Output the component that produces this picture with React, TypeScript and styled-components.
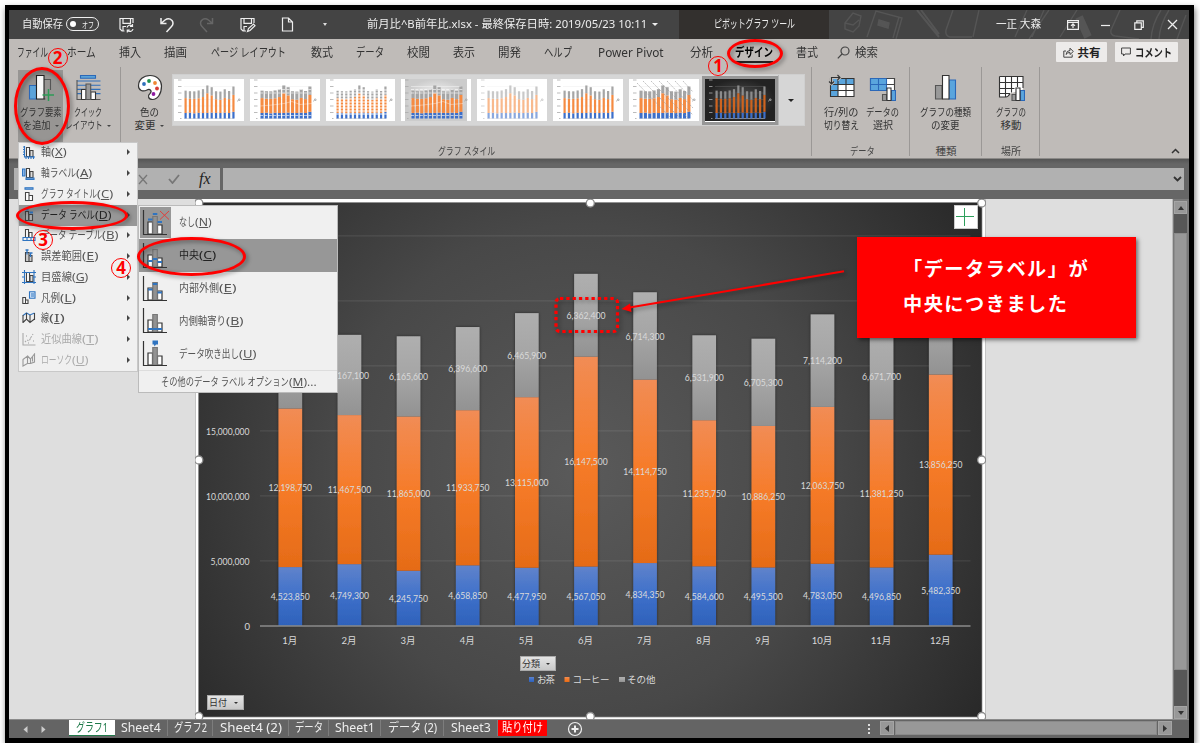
import { useLayoutEffect, useRef, useState } from 'react';
import type { ReactNode } from 'react';
import styled, { createGlobalStyle, css } from 'styled-components';

const GlobalStyle = createGlobalStyle`
  * { box-sizing: border-box; }
  body {
    margin: 0;
    background: #fff;
    overflow: hidden;
    font-family: 'Noto Sans', 'Noto Sans CJK JP', sans-serif;
    font-size: 12px;
    color: #333;
  }
  svg { display: block; flex: none; }
`;

// Condenses a label to the width its slot has, like the narrow kana of the UI font.
function Fit({ w, children }: { w: number; children: ReactNode }) {
  const ref = useRef<HTMLSpanElement>(null);
  const [scale, setScale] = useState(1);

  useLayoutEffect(() => {
    if (ref.current) setScale(w / ref.current.offsetWidth);
  }, [w]);

  return (
    <FitBox $w={w}>
      <FitInner ref={ref} style={{ transform: `scaleX(${scale})` }}>
        {children}
      </FitInner>
    </FitBox>
  );
}

const MONTHS = [
  [4523850, 12198750, 6120000],
  [4749300, 11467500, 6167100],
  [4245750, 11865000, 6165600],
  [4658850, 11933750, 6396600],
  [4477950, 13115000, 6465900],
  [4567050, 16147500, 6362400],
  [4834350, 14114750, 6714300],
  [4584600, 11235750, 6531900],
  [4495500, 10886250, 6705300],
  [4783050, 12063750, 7114200],
  [4496850, 11381250, 6671700],
  [5482350, 13856250, 6890000],
];
const SERIES = ['tea', 'coffee', 'other'];
const BASE_Y = 625.9;
const PX_PER_UNIT = 13 / 1000000;

const TABS = [
  { label: 'ファイル', w: 31, ml: 8 },
  { label: 'ホーム', w: 29, ml: 19 },
  { label: '挿入', w: 22, ml: 23 },
  { label: '描画', w: 23, ml: 23 },
  { label: 'ページ レイアウト', w: 75, ml: 24 },
  { label: '数式', w: 22, ml: 25 },
  { label: 'データ', w: 28, ml: 23 },
  { label: '校閲', w: 23, ml: 23 },
  { label: '表示', w: 22, ml: 23 },
  { label: '開発', w: 23, ml: 23 },
  { label: 'ヘルプ', w: 28, ml: 23 },
  { label: 'Power Pivot', w: 66, ml: 26 },
  { label: '分析', w: 23, ml: 26 },
  { label: 'デザイン', w: 38, ml: 22, active: true },
  { label: '書式', w: 22, ml: 23 },
];

const MENU = [
  { text: '軸', k: 'X', w: 26, icon: 'axis' },
  { text: '軸ラベル', k: 'A', w: 51, icon: 'axisTitle' },
  { text: 'グラフ タイトル', k: 'C', w: 72, icon: 'title' },
  { text: 'データ ラベル', k: 'D', w: 70, icon: 'label', active: true },
  { text: 'データ テーブル', k: 'B', w: 77, icon: 'table' },
  { text: '誤差範囲', k: 'E', w: 57, icon: 'error' },
  { text: '目盛線', k: 'G', w: 47, icon: 'grid' },
  { text: '凡例', k: 'L', w: 35, icon: 'legend' },
  { text: '線', k: 'I', w: 24, icon: 'line' },
  { text: '近似曲線', k: 'T', w: 57, icon: 'trend', off: true },
  { text: 'ローソク', k: 'U', w: 47, icon: 'candle', off: true },
];

const SUBMENU = [
  { text: 'なし', k: 'N', w: 33, kind: 'none' },
  { text: '中央', k: 'C', w: 37, kind: 'center', active: true },
  { text: '内部外側', k: 'E', w: 57, kind: 'insideEnd' },
  { text: '内側軸寄り', k: 'B', w: 64, kind: 'insideBase' },
  { text: 'データ吹き出し', k: 'U', w: 77, kind: 'callout' },
];

const SHEETS = [
  { label: 'Sheet4', w: 40, cell: 53 },
  { label: 'グラフ2', w: 33, cell: 45 },
  { label: 'Sheet4 (2)', w: 62, cell: 76 },
  { label: 'データ', w: 28, cell: 40 },
  { label: 'Sheet1', w: 40, cell: 52 },
  { label: 'データ (2)', w: 49, cell: 63 },
  { label: 'Sheet3', w: 40, cell: 54 },
];

function MenuIcon({ kind }: { kind: string }) {
  const d = '#444';
  const b = '#2f74c0';
  const bars = (
    <g fill="#fff" stroke={d}>
      <path d="M4.5 2.5h3v9h-3z" />
      <path d="M8 5.500h3v6H8z" fill="#ddd" />
    </g>
  );
  return (
    <svg width="14" height="14" viewBox="0 0 14 14" fill="none" strokeWidth="1.1">
      {kind === 'axis' && (<>{bars}<path d="M2.500 1v11H13" stroke={b} /><path d="M1 2h2M1 4.500h2M1 7h2M1 9.500h2M4 11v3M6.500 11v3M9 11v3M11.500 11v3" stroke={b} /></>)}
      {kind === 'axisTitle' && (<>{bars}<path d="M.5 3h2.500v7H.5zM4 12h8v1.500H4z" stroke={b} fill="#8db8e8" /></>)}
      {kind === 'title' && (<><path d="M3 .7h8v1.500H3z" stroke={b} fill="#8db8e8" /><path d="M3.500 5.500h3.500v8H3.500zM7 8.500h3.500v5H7z" stroke={d} fill="#fff" /></>)}
      {kind === 'label' && (<><path d="M3.500 3.500h3v9h-3zM7 6.500h3.500v6H7z" stroke={d} fill="#aaa" /><path d="M3.500 1.500h3M7.500 4.500h3.500" stroke={b} strokeWidth="1.800" /></>)}
      {kind === 'table' && (<><path d="M3.500 1.500h3v8h-3zM7 4.500h3v5H7z" stroke={d} fill="#fff" /><path d="M1 9.500h12v3H1zM5 9.500v3M9 9.500v3" stroke={b} /></>)}
      {kind === 'error' && (<><path d="M3.500 3.500h3.500v9H3.500zM7 6.500h3v6H7z" stroke={d} fill="#ccc" /><path d="M5 .500v5M3.500 1h3M8.500 4v4M7.500 4h3" stroke={b} strokeWidth="1.300" /></>)}
      {kind === 'grid' && (<>{bars}<path d="M0 2.500h14M0 7h3M11 7h3M0 12.500h14M2.500 0v14M12 0v14" stroke={b} /></>)}
      {kind === 'legend' && (<><path d="M.8 6.500h2.700v6H.8zM3.500 9h2.500v3.500H3.500z" stroke={d} fill="#fff" /><path d="M7.500.8H13v6.400H7.500z" stroke={b} fill="#cfe2f7" /><path d="M9 3h3M9 5h3" stroke={b} /></>)}
      {kind === 'line' && (<><path d="M1 4.500 4.500 2 8 4l4.500-2" stroke={b} /><path d="M1 11.500 4.500 8 8 11.500 12.500 8M1 4v8M4.500 2v7M8 4v8M12.500 2v7" stroke={d} /></>)}
      {kind === 'trend' && (<><path d="M1 1v12h12.500" stroke="#aaa" /><path d="m3 10 2-2 2 1 4-7" stroke="#aaa" strokeDasharray="1.500 1.500" /><path d="M4 4h1M8 6h1M11 9h1M6 11h1" stroke="#999" /></>)}
      {kind === 'candle' && (<path d="M1 6.500 5.500 3v7.500L1 13zM5.500 3 8.500 6v4.500l-3 0M8.500 6l4-5v8l-4 1.500M10.500 3.500v5" stroke="#999" />)}
    </svg>
  );
}

function LabelIcon({ kind }: { kind: string }) {
  const y = { none: [11.5, 6, 14], center: [20, 18, 21], insideEnd: [15.5, 10, 18.5], insideBase: [23, 23, 23] }[kind];
  return (
    <svg width="28" height="29" viewBox="0 0 28 29" fill="none" strokeWidth="1.200" stroke="#333">
      <path d="M6 14h4.500v12H6z" fill="#fff" />
      <path d="M15.500 17H20v9h-4.500z" fill="#fff" />
      <path d="M10.800 8.500h4.500V26h-4.500z" fill="#929292" stroke="#777" />
      <path d="M1.500 2v24.500H25" />
      {kind === 'callout' && <path d="M10.500 1.500H16v4h-2l-1.500 2-.5-2h-1.500z" fill="#2f74c0" stroke="none" />}
      {y && <path d={`M6 ${y[0]}h4.500M10.800 ${y[1]}h4.500M15.500 ${y[2]}h4.500`} stroke="#2f74c0" strokeWidth="1.800" />}
      {kind === 'none' && <path d="m18 3 9 8.500M27 3l-9 8.500" stroke="#e0403c" strokeWidth="1" />}
    </svg>
  );
}

function StyleThumb({ variant }: { variant: number }) {
  const dark = variant === 7;
  const heights = MONTHS.map((m) => m.map((v) => v * 0.00000122));
  const wide = variant === 1 || variant === 3 || variant === 6;
  return (
    <svg width="70" height="42" viewBox="0 0 70 42" opacity={variant === 4 ? 0.6 : 1}>
      <defs>
        <radialGradient id="thumbDark"><stop offset="0" stopColor="#555" /><stop offset="1" stopColor="#222" /></radialGradient>
        <radialGradient id="thumbSoft"><stop offset="0" stopColor="#fff" /><stop offset="1" stopColor="#ccc" /></radialGradient>
      </defs>
      <rect width="70" height="42" fill={dark ? 'url(#thumbDark)' : '#fff'} />
      {variant === 3 && <rect x="4" width="62" height="42" fill="url(#thumbSoft)" />}
      <path d="M4 1h3.500M4 7.500h3.500M4 14h3.500M4 20.500h3.500M4 27h3.500M4 33.500h3.500M6 39.500h1.500" stroke="#aaa" strokeWidth=".8" />
      <path d="M10 39.500h50" stroke="#ccc" strokeWidth=".6" />
      {variant !== 2 && <path d="M10 7.500h50M10 14h50M10 20.500h50M10 27h50M10 33.500h50" stroke={dark ? '#555' : '#f0f0f0'} strokeWidth=".6" />}
      {heights.map(([a, b, c], i) => {
        const w = wide ? 3.1 : 2.200;
        const x = 10.5 + i * 4.35;
        return (
          <g key={i}>
            <rect x={x} y={39.5 - a} width={w} height={a} fill="#3d6fc9" />
            <rect x={x} y={39.5 - a - b} width={w} height={b} fill={dark ? '#cf641f' : '#f58b42'} />
            <rect x={x} y={39.5 - a - b - c} width={w} height={c} fill={dark ? '#8c8c8c' : '#a5a5a5'} />
          </g>
        );
      })}
      {(variant === 1 || variant === 3) && (
        <>
          <path d="M10 36.500h52M10 10.500h52M10 14h52" stroke="#fff" strokeWidth=".6" strokeDasharray="3 1.400" />
          <path d="M10 27l12-1 12-1.500 8-2 8 3 12-1" stroke="#fff" strokeOpacity=".5" strokeWidth=".7" fill="none" />
        </>
      )}
      {variant === 2 && <path d="M10 11h52M10 14h52M10 17h52M10 20h52M10 23h52M10 26h52M10 29h52M10 32h52M10 35h52" stroke="#fff" strokeWidth=".9" />}
      {variant === 6 && (
        <path
          d="M8 4l34 35M14 2l38 38M22 2l38 38M30 2l34 34M38 2l26 27M46 2l18 19M54 2l10 11"
          stroke="#999"
          strokeWidth=".6"
          strokeDasharray="2 1"
        />
      )}
      <path d="M64.500 20h1.500v1.500h-1.500zM63 22h1" stroke="#aaa" strokeWidth=".8" fill="none" />
    </svg>
  );
}

function PivotChart() {
  const grid = [5, 10, 15, 20, 25, 30];
  return (
    <svg width="791" height="520" viewBox="195 199 791 520">
      <defs>
        <radialGradient id="bg" gradientUnits="userSpaceOnUse" cx="580" cy="470" r="490">
          <stop offset="0" stopColor="#5a5a5a" />
          <stop offset=".5" stopColor="#484848" />
          <stop offset="1" stopColor="#262626" />
        </radialGradient>
        <linearGradient id="tea" x2="0" y2="1">
          <stop offset="0" stopColor="#6083cb" />
          <stop offset=".5" stopColor="#3e70ca" />
          <stop offset="1" stopColor="#2e61ba" />
        </linearGradient>
        <linearGradient id="coffee" x2="0" y2="1">
          <stop offset="0" stopColor="#f18c55" />
          <stop offset=".5" stopColor="#f67b28" />
          <stop offset="1" stopColor="#e56b17" />
        </linearGradient>
        <linearGradient id="other" x2="0" y2="1">
          <stop offset="0" stopColor="#afafaf" />
          <stop offset=".5" stopColor="#a5a5a5" />
          <stop offset="1" stopColor="#929292" />
        </linearGradient>
        <filter id="barShadow" x="-50%" y="-5%" width="200%" height="110%">
          <feDropShadow dx="0" dy="0" stdDeviation="1.5" floodColor="#000" floodOpacity=".5" />
        </filter>
      </defs>
      <rect x="195" y="199" width="791" height="520" fill="#fff" />
      <path d="M195.500 199v520M985.500 199v520" stroke="#c4c4c4" />
      <rect x="198.500" y="202.500" width="783.500" height="514.500" fill="url(#bg)" stroke="#8a8a8a" strokeWidth=".7" />
      {grid.map((g) => (
        <path key={g} d={`M260 ${BASE_Y - g * 13}H970.500`} stroke="#fff" strokeOpacity=".11" />
      ))}
      {MONTHS.map((values, i) => {
        const cx = 290.3 + i * 59.13;
        let top = BASE_Y;
        return (
          <g key={i}>
            <g filter="url(#barShadow)">
              {values.map((v, s) => {
                const h = v * PX_PER_UNIT;
                top -= h;
                return <rect key={s} x={cx - 11.8} y={top} width="23.6" height={h} fill={`url(#${SERIES[s]})`} />;
              })}
            </g>
            <ChartText x={cx - 0.5} y="643.500" textAnchor="middle">{i + 1}月</ChartText>
          </g>
        );
      })}
      <path d="M260 626H970.500" stroke="#8b8b8b" strokeWidth="1.300" />
      {MONTHS.map((values, i) => {
        const cx = 290.3 + i * 59.13;
        let sum = 0;
        return values.map((v, s) => {
          const y = BASE_Y - (sum + v / 2) * PX_PER_UNIT;
          sum += v;
          if (s === 2 && (i === 0 || i === 11)) return null;
          const len = v >= 10000000 ? 43.5 : 39;
          return (
            <ChartText key={`${i}-${s}`} x={cx - len / 2} y={y + 3.7} textLength={len} lengthAdjust="spacingAndGlyphs">
              {v.toLocaleString('en-US')}
            </ChartText>
          );
        });
      })}
      <ChartText x="206" y="434.500" textLength="43.5" lengthAdjust="spacingAndGlyphs">15,000,000</ChartText>
      <ChartText x="206" y="499.500" textLength="43.5" lengthAdjust="spacingAndGlyphs">10,000,000</ChartText>
      <ChartText x="210.500" y="564.500" textLength="39" lengthAdjust="spacingAndGlyphs">5,000,000</ChartText>
      <ChartText x="244.500" y="629.500">0</ChartText>
      <rect x="529" y="677" width="5" height="5" fill="url(#tea)" />
      <ChartText x="537" y="682.500" textLength="18">お茶</ChartText>
      <rect x="564.500" y="677" width="5" height="5" fill="url(#coffee)" />
      <ChartText x="572.500" y="682.500" textLength="37">コーヒー</ChartText>
      <rect x="619" y="677" width="6" height="5" fill="url(#other)" />
      <ChartText x="627" y="682.500" textLength="28.5">その他</ChartText>
      {[203, 460, 716.5].map((y) =>
        [198.8, 590.3, 981.7]
          .filter((x) => !(y === 460 && x === 590.3))
          .map((x) => <circle key={`${x}-${y}`} cx={x} cy={y} r="4" fill="#fff" stroke="#8c8c8c" strokeWidth="1.3" />)
      )}
    </svg>
  );
}

function TitleSketches() {
  return (
    <svg width="350" height="29" viewBox="0 0 350 29" fill="none" stroke="#555" strokeWidth="1.4">
      <path d="m8 13 8-10 8 3-2 10-6 6-8-3zM8 13l8 2 6-5" />
      <path d="m30 27 9-26 26 7-6 21M62 7l-6 21" />
      <path d="m42 10 10 3-1 5-10-3z" fill="#555" />
      <path d="m80 0 22 27M84 0l18 24" strokeWidth="2" />
      <path d="m116 0-7 20q-1 6 4 7h22M142 0l-6 27" />
      <path d="m178 27 12-27M207 0l-12 27M212 0l-20 29M240 0l-17 27" />
      <path d="m242 7 9 20" strokeWidth="8" />
      <path d="M283 0l-9 20q-1 5 4 6l24 3M324 0q-9 14-10 29M332 0q-9 14-10 29M349 5l-9 24" />
    </svg>
  );
}

export default function App() {
  return (
    <>
      <GlobalStyle />
      <Window>
        <TitleBar>
          <TitleSlot $x={13} $text><Fit w={41}>自動保存</Fit></TitleSlot>
          <Toggle><ToggleDot /><Fit w={12}>オフ</Fit></Toggle>
          <TitleSlot $x={20}>
            <svg width="16" height="16" viewBox="0 0 16 16" fill="none" stroke="#eee" strokeWidth="1.2">
              <path d="M5.500 14H3L1 12V1.500h13V6M4 1.500v4.800h7.500V1.500M4 14V9.500h3" />
              <path d="M8 10.500a3 3 0 0 1 5-1.500M13.500 7v2.500H11M14 12a3 3 0 0 1-5.300 1.300M8.300 15.500V13h2.500" />
            </svg>
          </TitleSlot>
          <TitleSlot $x={24}>
            <svg width="16" height="16" viewBox="0 0 16 16" fill="none" stroke="#eee" strokeWidth="1.5">
              <path d="M2 1v5.500h5.500M2 6.500 6 3q4-2.700 7 .5 2.200 3-.5 6L7.500 15" />
            </svg>
          </TitleSlot>
          <TitleSlot $x={24}>
            <svg width="16" height="16" viewBox="0 0 16 16" fill="none" stroke="#666" strokeWidth="1.5">
              <path d="M13.500 1v5.500H8M13.500 6.500 9.500 3q-4-2.700-7 .5-2.200 3 .5 6L8 15" />
            </svg>
          </TitleSlot>
          <TitleSlot $x={25}>
            <svg width="16" height="16" viewBox="0 0 16 16" fill="none" stroke="#eee" strokeWidth="1.2">
              <path d="M6 14H3L1 12V1.500h13V6M4 1.500v4.800h7.500V1.500M4 14V9.500h3M7.500 14.500l1-3 5-4.500 1.500 1.700-5 4.800z" />
            </svg>
          </TitleSlot>
          <TitleSlot $x={25}>
            <svg width="13" height="15" viewBox="0 0 13 15" fill="none" stroke="#eee" strokeWidth="1.2">
              <path d="M1.500 1h6l4 4v9h-10zM7.500 1v4h4" />
            </svg>
          </TitleSlot>
          <TitleSlot $x={29}><Caret $c="#ddd" $s={2.5} /></TitleSlot>
          <TitleSlot $x={40} $text><Fit w={280}>前月比^B前年比.xlsx - 最終保存日時: 2019/05/23 10:11</Fit></TitleSlot>
          <TitleSlot $x={5}><Caret $c="#eee" $s={3} /></TitleSlot>
          <ContextTitle><Fit w={81}>ピボットグラフ ツール</Fit></ContextTitle>
          <TitleRight>
            <Sketches><TitleSketches /></Sketches>
            <TitleSlot $x={167} $text><Fit w={45}>一正 大森</Fit></TitleSlot>
            <TitleSlot $x={26}>
              <svg width="12" height="10" viewBox="0 0 12 10" fill="none" stroke="#eee" strokeWidth="1.2">
                <path d="M.6.6h10.800v8.800H.6zM.6 2.500h10.800M6 8V4M4 5.800l2-2 2 2" />
              </svg>
            </TitleSlot>
            <TitleSlot $x={22}><svg width="9" height="10"><path d="M0 5.500h9" stroke="#eee" strokeWidth="1.2" /></svg></TitleSlot>
            <TitleSlot $x={24}>
              <svg width="10" height="10" viewBox="0 0 10 10" fill="none" stroke="#eee" strokeWidth="1.2">
                <path d="M.8 2.800h6.500v6.500H.8zM2.800 2.500V.8h6.500v6.500H7.500" />
              </svg>
            </TitleSlot>
            <TitleSlot $x={23}><svg width="11" height="11"><path d="m1 1 9 9M10 1l-9 9" stroke="#eee" strokeWidth="1.3" /></svg></TitleSlot>
          </TitleRight>
        </TitleBar>

        <TabRow>
          {TABS.map((t) => (
            <Tab key={t.label} $ml={t.ml} $active={t.active}><Fit w={t.w}>{t.label}</Fit></Tab>
          ))}
          <Tab $ml={19}>
            <svg width="13" height="13" viewBox="0 0 13 13" fill="none" stroke="#444" strokeWidth="1.2">
              <circle cx="8" cy="5" r="4" /><path d="M5 8 .800 12.400" />
            </svg>
          </Tab>
          <Tab $ml={5}><Fit w={23}>検索</Fit></Tab>
          <TabActions>
            <ActionButton $w={51}>
              <svg width="11" height="11" viewBox="0 0 11 11" fill="none" stroke="#444">
                <path d="M3 4H.8v6.200h8.400V7.500M3 7.500q.500-4 4-4V1.200L10.300 4.500 7 7.500V5.500Q4.500 5.300 3 7.500z" />
              </svg>
              <Fit w={23}>共有</Fit>
            </ActionButton>
            <ActionButton $w={63}>
              <svg width="10" height="10" viewBox="0 0 10 10" fill="none" stroke="#444"><path d="M.6 1h8.800v6H4L2.500 9V7H.6z" /></svg>
              <Fit w={37}>コメント</Fit>
            </ActionButton>
          </TabActions>
        </TabRow>

        <Ribbon>
          <Group $w={112} $pad={9}>
            <BigButton $w={45} $pressed>
              <svg width="27" height="27" viewBox="0 0 27 27" fill="none" strokeWidth="1.1">
                <path d="M2.500 11.500h7V25h-7z" fill="#5ba3d9" stroke="#2b68b8" />
                <path d="M17 5.500h6.500V16M17 25h1.500" stroke="#555" />
                <path d="M9.500 1.500H17V25H9.500z" fill="#f8f8f8" stroke="#222" />
                <path d="M21.500 15v12M15.500 21h12" stroke="#2e9b57" strokeWidth="1.5" />
              </svg>
              <BtnText><Fit w={42}>グラフ要素</Fit></BtnText>
              <BtnText><Fit w={28}>を追加</Fit><Caret $c="#444" $s={2} /></BtnText>
            </BigButton>
            <BigButton $w={50}>
              <svg width="27" height="27" viewBox="0 0 27 27" fill="none" strokeWidth="1.1">
                <path d="M5.500 1.500h15v2.700h-15z" fill="#5ba3d9" stroke="#2b68b8" />
                <path d="M2 7h23.500M2 11.200h23.500M2 15.400h23.500M2 19.600h23.500" stroke="#2f6fba" />
                <path d="M2 6v19.500h23.500" stroke="#555" />
                <path d="M6.500 15.500H11v10H6.500zM15.800 18h4.700v7.500h-4.700z" fill="#fff" stroke="#333" />
                <path d="M11 10h4.700v15.500H11z" fill="#999" stroke="#555" />
              </svg>
              <BtnText><Fit w={28}>クイック</Fit></BtnText>
              <BtnText><Fit w={38}>レイアウト</Fit><Caret $c="#444" $s={2} /></BtnText>
            </BigButton>
          </Group>
          <Group $w={691} $pad={5}>
            <GroupBody>
              <BigButton $w={46}>
                <svg width="27" height="27" viewBox="0 0 27 27">
                  <path d="M14 1.500c7 0 11.500 4.800 11.500 10.500 0 8-4 13.500-9 13.500-4.500 0-5-4-2.500-6 2.500-2.500 0-5-3-3.500-4 2-8.500.5-8.500-4C2.500 5.500 7.500 1.500 14 1.500z" fill="#fff" stroke="#333" strokeWidth="1.2" />
                  <circle cx="8" cy="10" r="1.900" fill="#2f6fba" />
                  <circle cx="13" cy="7" r="1.900" fill="#1f9150" />
                  <circle cx="19" cy="9" r="1.900" fill="#ee8632" />
                  <circle cx="21" cy="14.500" r="1.900" fill="#d63a34" />
                  <circle cx="17.500" cy="20" r="1.900" fill="#8e1ba0" />
                </svg>
                <BtnText><Fit w={19}>色の</Fit></BtnText>
                <BtnText><Fit w={21}>変更</Fit><Caret $c="#444" $s={2} /></BtnText>
              </BigButton>
              <Gallery>
                {[0, 1, 2, 3, 4, 5, 6, 7].map((v) => (
                  <Thumb key={v} $selected={v === 7}><StyleThumb variant={v} /></Thumb>
                ))}
                <GalleryMore><Caret $c="#222" $s={3} /></GalleryMore>
              </Gallery>
            </GroupBody>
            <GroupLabel><Fit w={57}>グラフ スタイル</Fit></GroupLabel>
          </Group>
          <Group $w={98} $pad={8}>
            <GroupBody>
              <BigButton $w={42}>
                <svg width="27" height="27" viewBox="0 0 27 27" fill="none" strokeWidth="1.1">
                  <path d="M2.500 4.500h23.500v18H2.500z" fill="#fff" />
                  <path d="M2.500 4.500h23.500v6H2.500zM2.500 10.500h7.500v12H2.500z" fill="#5aa5dd" />
                  <path d="M2.500 10.500h23.500M2.500 16.500h23.500M10 4.500v18M18 4.500v18M2.500 4.500h23.500v18H2.500z" stroke="#333" />
                  <path d="M3.500 10V3.500H12M9.500 1 12 3.500 9.500 6M1 7.500 3.500 10 6 7.500" stroke="#bfbbb8" strokeWidth="3" />
                  <path d="M3.500 10V3.500H12M9.500 1 12 3.500 9.500 6M1 7.500 3.500 10 6 7.500" stroke="#333" />
                </svg>
                <BtnText><Fit w={34}>行/列の</Fit></BtnText>
                <BtnText><Fit w={35}>切り替え</Fit></BtnText>
              </BigButton>
              <BigButton $w={41}>
                <svg width="27" height="27" viewBox="0 0 27 27" fill="none" strokeWidth="1.1">
                  <path d="M1.500 4.500h24v12h-24z" fill="#fff" stroke="#444" />
                  <path d="M1.500 4.500h16v12h-16z" fill="#5aa5dd" />
                  <path d="M1.500 4.500h16v12h-16zM1.500 10.500h16M9.500 4.500v12" stroke="#2b68b8" />
                  <path d="M17.500 10.500h8M17.500 4.500h8v6" stroke="#444" />
                  <path d="M13.500 20.500h4v6h-4z" fill="#999" stroke="#555" />
                  <path d="M22.500 16.500h4v10h-4z" fill="#5aa5dd" stroke="#2b68b8" />
                  <path d="M18 14h4v12.500h-4z" fill="#fff" stroke="#333" />
                </svg>
                <BtnText><Fit w={33}>データの</Fit></BtnText>
                <BtnText><Fit w={20}>選択</Fit></BtnText>
              </BigButton>
            </GroupBody>
            <GroupLabel><Fit w={25}>データ</Fit></GroupLabel>
          </Group>
          <Group $w={72} $pad={5}>
            <GroupBody>
              <BigButton $w={61}>
                <svg width="27" height="27" viewBox="0 0 27 27" fill="none" strokeWidth="1.1">
                  <path d="M3.500 11.500h6.500V25H3.500z" fill="#999" stroke="#555" />
                  <path d="M17 6h6.500v19H17z" fill="#5aa5dd" stroke="#2b68b8" />
                  <path d="M10.500 1.500H17V25h-6.500z" fill="#fff" stroke="#333" />
                </svg>
                <BtnText><Fit w={51}>グラフの種類</Fit></BtnText>
                <BtnText><Fit w={29}>の変更</Fit></BtnText>
              </BigButton>
            </GroupBody>
            <GroupLabel><Fit w={21}>種類</Fit></GroupLabel>
          </Group>
          <Group $w={58} $pad={4}>
            <GroupBody>
              <BigButton $w={50}>
                <svg width="27" height="27" viewBox="0 0 27 27" fill="none" strokeWidth="1.1">
                  <path d="M1.500 2.500H25v13l-13 4q-2 3.500-4 3.500H1.500z" fill="#fff" />
                  <path d="M1.500 2.500H25V14M1.500 2.500v20.500H8q2 0 4-3.500M1.500 8.500H25M1.500 14.500h15M7.500 2.500v20M13.500 2.500v16M19.500 2.500V13M1.500 19.500H12" stroke="#333" />
                  <path d="M14 20.500h4v6h-4z" fill="#999" stroke="#555" />
                  <path d="M22.500 16.500h4v10h-4z" fill="#5aa5dd" stroke="#2b68b8" />
                  <path d="M18 14h4v12.500h-4z" fill="#fff" stroke="#333" />
                </svg>
                <BtnText><Fit w={30}>グラフの</Fit></BtnText>
                <BtnText><Fit w={21}>移動</Fit></BtnText>
              </BigButton>
            </GroupBody>
            <GroupLabel><Fit w={20}>場所</Fit></GroupLabel>
          </Group>
          <Collapse>
            <svg width="9" height="6"><path d="m1 5 3.500-3.500L8 5" fill="none" stroke="#333" strokeWidth="1.5" /></svg>
          </Collapse>
        </Ribbon>

        <FormulaRow>
          <FormulaTools>
            <svg width="11" height="11"><path d="m1 1 8 9M9 1 1 10" stroke="#777" strokeWidth="1.3" /></svg>
            <svg width="12" height="10"><path d="m1 5 3.500 4L11 1" fill="none" stroke="#777" strokeWidth="1.8" /></svg>
            <Fx>fx</Fx>
          </FormulaTools>
          <FormulaInput>
            <svg width="9" height="6"><path d="m1 1 3.500 3.500L8 1" fill="none" stroke="#333" strokeWidth="1.8" /></svg>
          </FormulaInput>
        </FormulaRow>

        <Workspace>
          <ChartFrame>
            <PivotChart />
            <PivotButton $x={325} $y={457} $w={36}><Fit w={18}>分類</Fit><Caret $c="#333" $s={2} /></PivotButton>
            <PivotButton $x={12} $y={496} $w={37}><Fit w={18}>日付</Fit><Caret $c="#333" $s={2} /></PivotButton>
            <PlusButton>
              <svg width="18" height="18"><path d="M8.500 0v18M0 8.500h18" stroke="#2ea05c" /></svg>
            </PlusButton>
          </ChartFrame>
          <VScroll>
            <ScrollButton $w={13} $h={13}><Caret $c="#333" $s={3.5} $up /></ScrollButton>
            <Track $size={19} />
            <VThumb />
            <Track $size={36} />
            <ScrollButton $w={13} $h={13}><Caret $c="#333" $s={3.5} /></ScrollButton>
          </VScroll>
        </Workspace>

        <SheetBar>
          <SheetNav>
            <svg width="5" height="7"><path d="M4.500 0v7L.5 3.500z" fill="#ccc" /></svg>
            <svg width="5" height="7"><path d="M.5 0v7l4-3.500z" fill="#ccc" /></svg>
          </SheetNav>
          <ActiveSheet><Fit w={32}>グラフ1</Fit></ActiveSheet>
          {SHEETS.map((s) => (
            <Sheet key={s.label} $w={s.cell}><Fit w={s.w}>{s.label}</Fit></Sheet>
          ))}
          <RedSheet><Fit w={41}>貼り付け</Fit></RedSheet>
          <AddSheet>
            <svg width="16" height="16" fill="none" stroke="#eee"><circle cx="8" cy="8" r="6.5" strokeWidth="1.2" /><path d="M8 4.500v7M4.500 8h7" strokeWidth="2" /></svg>
          </AddSheet>
          <HScroll>
            <svg width="3" height="11" fill="#ddd"><path d="M0 0h2v2H0zM0 4h2v2H0zM0 8h2v2H0z" /></svg>
            <HBar>
              <ScrollButton $w={14} $h={14}><svg width="4" height="7"><path d="M4 0v7L0 3.500z" fill="#333" /></svg></ScrollButton>
              <HThumb />
              <ScrollButton $w={14} $h={14}><svg width="4" height="7"><path d="M0 0v7l4-3.500z" fill="#333" /></svg></ScrollButton>
            </HBar>
          </HScroll>
        </SheetBar>
      </Window>

      <Menu>
        {MENU.map((m) => (
          <MenuItem key={m.k} $active={m.active} $off={m.off}>
            <MenuIcon kind={m.icon} />
            <MenuText>
              <Fit w={m.w - 16}>{m.text}</Fit>
              <AccessKey><Fit w={16}>(<u>{m.k}</u>)</Fit></AccessKey>
            </MenuText>
            <MenuArrow />
          </MenuItem>
        ))}
      </Menu>
      <Submenu>
        {SUBMENU.map((m) => (
          <SubItem key={m.k} $active={m.active}>
            <SubIcon $checked={m.kind === 'none'}><LabelIcon kind={m.kind} /></SubIcon>
            <MenuText>
              <Fit w={m.w - 17}>{m.text}</Fit>
              <AccessKey><Fit w={17}>(<u>{m.k}</u>)</Fit></AccessKey>
            </MenuText>
          </SubItem>
        ))}
        <SubMore>
          <MenuText>
            <Fit w={128}>その他のデータ ラベル オプション</Fit>
            <AccessKey><Fit w={28}>(<u>M</u>)...</Fit></AccessKey>
          </MenuText>
        </SubMore>
      </Submenu>

      <Ring $x={13.5} $y={66.5} $w={56} $h={78} />
      <Ring $x={727} $y={39} $w={56} $h={29} />
      <Ring $x={16} $y={200.5} $w={112} $h={29} />
      <Ring $x={136.5} $y={237} $w={109} $h={39} />
      <Step $x={708} $y={56}>1</Step>
      <Step $x={47.5} $y={47.5}>2</Step>
      <Step $x={33} $y={229.5}>3</Step>
      <Step $x={111} $y={258}>4</Step>
      <Arrow>
        <svg width="300" height="90" viewBox="550 260 300 90" fill="none" stroke="#f00">
          <rect x="556" y="298.500" width="61.500" height="33" rx="4" strokeWidth="3.2" strokeDasharray="3.3 3" />
          <path d="M844 271.300 628 307.700" strokeWidth="2" />
          <path d="m621.500 309 8.500-5.500 1.500 8.500z" fill="#f00" stroke="none" />
        </svg>
      </Arrow>
      <Callout>
        <div>「データラベル」が</div>
        <div>中央につきました</div>
      </Callout>
    </>
  );
}

const FitBox = styled.span<{ $w: number }>`
  display: inline-block;
  flex: none;
  width: ${(p) => p.$w}px;
  text-align: left;
  white-space: nowrap;
`;

const FitInner = styled.span`
  display: inline-block;
  transform-origin: 0 50%;
`;

const Caret = styled.i<{ $c: string; $s: number; $up?: boolean }>`
  flex: none;
  border: ${(p) => p.$s}px solid transparent;
  border-top: ${(p) => (p.$up ? 0 : p.$s + 0.5)}px solid ${(p) => p.$c};
  border-bottom: ${(p) => (p.$up ? `${p.$s + 0.5}px solid ${p.$c}` : 0)};
`;

const Window = styled.div`
  width: 1189px;
  height: 738px;
  margin: 5px 0 0 5px;
  border: solid #000;
  border-width: 5px 5px 5px 4px;
  box-shadow: 1px 3px 6px rgba(0, 0, 0, 0.55);
  display: flex;
  flex-direction: column;
`;

const TitleBar = styled.div`
  height: 29px;
  flex: none;
  display: flex;
  background: #444;
  color: #eee;
  font-size: 11.5px;
`;

const TitleSlot = styled.div<{ $x: number; $text?: boolean }>`
  margin-left: ${(p) => p.$x}px;
  padding-bottom: ${(p) => (p.$text ? 3 : 0)}px;
  display: flex;
  align-items: center;
  position: relative;
`;

const Toggle = styled.div`
  width: 33px;
  height: 14px;
  margin: 7px 0 0 3px;
  border: 1px solid #eee;
  border-radius: 7px;
  display: flex;
  align-items: center;
  gap: 6px;
  padding-left: 3px;
  font-size: 8.5px;
`;

const ToggleDot = styled.i`
  width: 6px;
  height: 6px;
  border-radius: 50%;
  background: #fff;
`;

const ContextTitle = styled.div`
  width: 150px;
  margin-left: auto;
  padding-bottom: 3px;
  background: #33302e;
  display: flex;
  align-items: center;
  justify-content: center;
`;

const TitleRight = styled.div`
  width: 360px;
  display: flex;
  position: relative;
`;

const Sketches = styled.div`
  position: absolute;
  left: 8px;
  top: 0;
`;

const TabRow = styled.div`
  height: 27px;
  flex: none;
  display: flex;
  background: #bfbbb8;
  font-size: 12px;
`;

const Tab = styled.div<{ $ml: number; $active?: boolean }>`
  margin-left: ${(p) => p.$ml}px;
  height: 26px;
  display: flex;
  align-items: center;
  ${(p) =>
    p.$active &&
    css`
      font-weight: 700;
      color: #000;
      height: 24px;
      padding-top: 4px;
      border-bottom: 2px solid #222;
    `}
`;

const TabActions = styled.div`
  display: flex;
  gap: 8px;
  margin: 3px 11px 0 auto;
`;

const ActionButton = styled.div<{ $w: number }>`
  width: ${(p) => p.$w}px;
  height: 20px;
  background: #edebea;
  border-radius: 1px;
  display: flex;
  align-items: center;
  justify-content: center;
  gap: 4px;
  font-size: 11.5px;
  font-weight: 700;
  color: #222;
`;

const Ribbon = styled.div`
  height: 93px;
  flex: none;
  display: flex;
  background: #bfbbb8;
  border-bottom: 1px solid #8c8a88;
`;

const Group = styled.div<{ $w: number; $pad: number }>`
  width: ${(p) => p.$w}px;
  padding-left: ${(p) => p.$pad}px;
  margin: 1px 0 2px;
  border-right: 1px solid #9b9896;
  display: flex;
  flex-wrap: wrap;
`;

const GroupBody = styled.div`
  display: flex;
  width: 100%;
  height: 74px;
`;

const GroupLabel = styled.div`
  width: 100%;
  height: 16px;
  padding-right: 4px;
  line-height: 20px;
  text-align: center;
  font-size: 10.5px;
  color: #444;
`;

const BigButton = styled.div<{ $w: number; $pressed?: boolean }>`
  width: ${(p) => p.$w}px;
  height: 76px;
  margin-top: 3px;
  padding-top: 4px;
  display: flex;
  flex-direction: column;
  align-items: center;
  background: ${(p) => (p.$pressed ? '#979593' : 'transparent')};
`;

const BtnText = styled.div`
  display: flex;
  align-items: center;
  gap: 4px;
  height: 13.5px;
  margin-bottom: -0.5px;
  line-height: 13.5px;
  font-size: 10.5px;
  position: relative;
  top: 5px;
`;

const Gallery = styled.div`
  width: 633px;
  height: 52px;
  margin-top: 7px;
  padding-left: 1px;
  border: 1px solid #cfcfcf;
  background: #d6d6d6;
  display: flex;
  align-items: center;
  gap: 6px;
`;

const Thumb = styled.div<{ $selected?: boolean }>`
  flex: none;
  width: 69.8px;
  height: 42px;
  overflow: hidden;
  background: #fff;
  ${(p) =>
    p.$selected &&
    css`
      width: 76px;
      height: 49px;
      margin-left: -3px;
      border: 3px solid #979797;
    `}
`;

const GalleryMore = styled.div`
  flex: 1;
  align-self: stretch;
  margin-left: -6px;
  border-left: 1px solid #b8b8b8;
  display: flex;
  align-items: center;
  justify-content: center;
`;

const Collapse = styled.div`
  margin: 82px 9px 0 auto;
`;

const FormulaRow = styled.div`
  height: 40px;
  flex: none;
  display: flex;
  gap: 3px;
  padding: 9px 5px;
  background: linear-gradient(#555, #666 5px);
`;

const FormulaTools = styled.div`
  width: 206px;
  background: #b1b1b1;
  display: flex;
  align-items: center;
  gap: 19px;
  padding-left: 124px;
`;

const Fx = styled.span`
  font: italic 16px 'Liberation Serif', serif;
  color: #222;
`;

const FormulaInput = styled.div`
  flex: 1;
  background: #b1b1b1;
  display: flex;
  align-items: center;
  justify-content: flex-end;
  padding-right: 2px;
`;

const Workspace = styled.div`
  height: 520px;
  flex: none;
  display: flex;
  background: #dedede;
`;

const ChartFrame = styled.div`
  margin-left: 186px;
  width: 791px;
  position: relative;
`;

const ChartText = styled.text`
  font-family: Lato, 'Noto Sans CJK JP', sans-serif;
  font-size: 9.5px;
  fill: #d9d9d9;
`;

const PivotButton = styled.div<{ $x: number; $y: number; $w: number }>`
  position: absolute;
  left: ${(p) => p.$x}px;
  top: ${(p) => p.$y}px;
  width: ${(p) => p.$w}px;
  height: 15px;
  background: linear-gradient(#e4e4e4, #c8c8c8);
  border: 1px solid #aaa;
  display: flex;
  align-items: center;
  justify-content: space-between;
  padding: 0 5px 0 1px;
  font-size: 9px;
`;

const PlusButton = styled.div`
  position: absolute;
  left: 759px;
  top: 6px;
  width: 24px;
  height: 24px;
  background: #fff;
  border: 1px solid #ccc;
  display: flex;
  align-items: center;
  padding-left: 1px;
`;

const VScroll = styled.div`
  width: 17px;
  margin-left: auto;
  padding: 2px 2px 0 1px;
  background: #7a7a7a;
  border-left: 1px solid #bbb;
  display: flex;
  flex-direction: column;
`;

const Track = styled.div<{ $size: number }>`
  height: ${(p) => p.$size}px;
  background: #575757;
`;

const VThumb = styled.div`
  flex: 1;
  background: #989898;
  border: 1px solid #8a8a8a;
`;

const ScrollButton = styled.div<{ $w: number; $h: number }>`
  width: ${(p) => p.$w}px;
  height: ${(p) => p.$h}px;
  background: #989898;
  border: 1px solid #a5a5a5;
  display: flex;
  align-items: center;
  justify-content: center;
`;

const SheetBar = styled.div`
  height: 19px;
  flex: none;
  background: #646464;
  border-top: 1px solid #8a8a8a;
  display: flex;
  color: #eee;
  font-size: 12px;
  line-height: 16px;
`;

const SheetNav = styled.div`
  width: 60px;
  padding: 6px 0 0 14px;
  display: flex;
  gap: 13px;
`;

const ActiveSheet = styled.div`
  width: 46px;
  height: 16px;
  background: #fff;
  color: #1f7a4a;
  text-align: center;
  border-bottom: 1px solid #1f7a4a;
`;

const Sheet = styled.div<{ $w: number }>`
  width: ${(p) => p.$w}px;
  height: 16px;
  text-align: center;
  border-right: 1px solid #7d7d7d;
`;

const RedSheet = styled.div`
  width: 49px;
  height: 16px;
  background: #f00;
  color: #fff;
  text-align: center;
`;

const AddSheet = styled.div`
  margin: 1px 0 0 20px;
`;

const HScroll = styled.div`
  margin-left: auto;
  padding: 1px 17px 0 0;
  display: flex;
  align-items: flex-start;
  gap: 9px;
  > svg { margin-top: 3px; }
`;

const HBar = styled.div`
  width: 292px;
  display: flex;
  gap: 1px;
`;

const HThumb = styled.div`
  flex: 1;
  height: 14px;
  background: #989898;
  border: 1px solid #8a8a8a;
`;

const Menu = styled.div`
  position: absolute;
  left: 18px;
  top: 142px;
  width: 120px;
  height: 230px;
  background: #f0f0f0;
  border: 1px solid #c8c8c8;
  font-size: 11px;
`;

const MenuText = styled.div`
  display: flex;
  align-items: center;
  height: 18px;
  line-height: 18px;
`;

const AccessKey = styled.span`
  font-size: 11.5px;
`;

const MenuItem = styled.div<{ $active?: boolean; $off?: boolean }>`
  height: 20.75px;
  padding: 0 7px 2px 3px;
  display: flex;
  align-items: center;
  gap: 5px;
  background: ${(p) => (p.$active ? '#979797' : 'transparent')};
  color: ${(p) => (p.$off ? '#aaa' : p.$active ? '#222' : '#555')};
`;

const MenuArrow = styled.i`
  margin-left: auto;
  border: 3px solid transparent;
  border-left: 3.5px solid #444;
  border-right: 0;
`;

const Submenu = styled.div`
  position: absolute;
  left: 138px;
  top: 205px;
  width: 200px;
  height: 188px;
  background: #f0f0f0;
  border: 1px solid #bbb;
  font-size: 11px;
`;

const SubItem = styled.div<{ $active?: boolean }>`
  height: 32.85px;
  display: flex;
  align-items: center;
  gap: 8px;
  padding-left: 1px;
  background: ${(p) => (p.$active ? '#979797' : 'transparent')};
  color: ${(p) => (p.$active ? '#222' : '#555')};
`;

const SubIcon = styled.div<{ $checked?: boolean }>`
  width: 31px;
  height: 31px;
  padding: 1px 0 0 2px;
  background: ${(p) => (p.$checked ? '#979797' : 'transparent')};
`;

const SubMore = styled.div`
  height: 22px;
  border-top: 1px solid #ddd;
  padding: 2px 0 0 22px;
  color: #555;
`;

const Ring = styled.div<{ $x: number; $y: number; $w: number; $h: number }>`
  position: absolute;
  left: ${(p) => p.$x}px;
  top: ${(p) => p.$y}px;
  width: ${(p) => p.$w}px;
  height: ${(p) => p.$h}px;
  border: 3px solid #f00;
  border-radius: 50%;
  filter: drop-shadow(2px 2px 2px rgba(0, 0, 0, 0.4));
`;

const Step = styled.div<{ $x: number; $y: number }>`
  position: absolute;
  left: ${(p) => p.$x}px;
  top: ${(p) => p.$y}px;
  width: 20px;
  height: 20px;
  border: 1px solid #f00;
  border-radius: 50%;
  color: #f00;
  font: 700 17px/18px 'Noto Sans', sans-serif;
  text-align: center;
`;

const Arrow = styled.div`
  position: absolute;
  left: 550px;
  top: 260px;
  filter: drop-shadow(2px 2px 2px rgba(0, 0, 0, 0.4));
`;

const Callout = styled.div`
  position: absolute;
  left: 857px;
  top: 237px;
  width: 279px;
  height: 101px;
  padding: 14px 0 0 46px;
  background: #f00;
  color: #fff;
  font: 700 19.2px/34.5px 'Noto Sans CJK JP', sans-serif;
  letter-spacing: 1.5px;
  box-shadow: 2px 2px 4px rgba(0, 0, 0, 0.5);
`;
